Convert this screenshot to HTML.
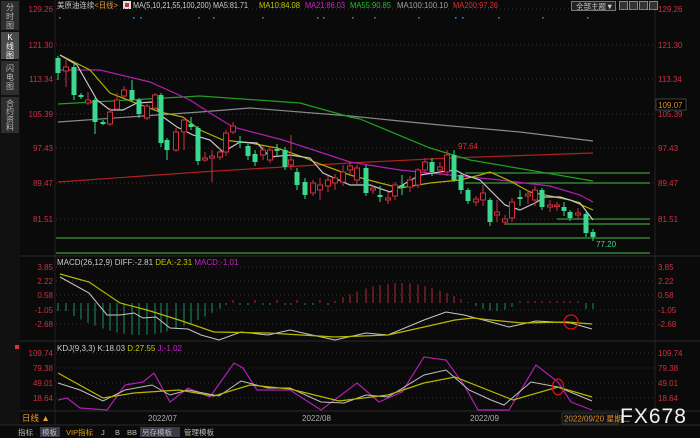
<!DOCTYPE html>
<html><head><meta charset="utf-8"><style>
html,body{margin:0;padding:0;background:#0a0a0a;width:700px;height:438px;overflow:hidden;font-family:"Liberation Sans","Noto Sans CJK SC",sans-serif}
svg{position:absolute;left:0;top:0}
</style></head><body>
<svg id="s" width="700" height="438" xmlns="http://www.w3.org/2000/svg" font-family="Liberation Sans, Noto Sans CJK SC, sans-serif">
<rect width="700" height="438" fill="#0a0a0a"/>
<rect x="0" y="0" width="20" height="425" fill="#111"/>
<rect x="1" y="1" width="18" height="29" fill="#2e2e2e"/>
<rect x="1" y="32" width="18" height="27" fill="#4a4a4a"/>
<rect x="1" y="61" width="18" height="34" fill="#2e2e2e"/>
<rect x="1" y="97" width="18" height="36" fill="#2e2e2e"/>
<g fill="#b8b8b8" font-size="8" text-anchor="middle">
<text x="10" y="10">分</text><text x="10" y="19">时</text><text x="10" y="28">图</text>
<text x="10" y="40" fill="#fff">K</text><text x="10" y="49" fill="#fff">线</text><text x="10" y="58" fill="#fff">图</text>
<text x="10" y="71">闪</text><text x="10" y="80">电</text><text x="10" y="89">图</text>
<text x="10" y="106">合</text><text x="10" y="114">约</text><text x="10" y="122">资</text><text x="10" y="130">料</text>
</g>
<line x1="55" y1="0" x2="55" y2="425" stroke="#222"/>
<line x1="655" y1="0" x2="655" y2="425" stroke="#222"/>
<g stroke="#2a2a2a"><line x1="20" y1="256" x2="700" y2="256"/><line x1="20" y1="341" x2="700" y2="341"/><line x1="20" y1="411" x2="700" y2="411"/><line x1="0" y1="425" x2="700" y2="425"/></g>
<text x="57" y="8" font-size="8" fill="#c8c8c8" textLength="61" lengthAdjust="spacingAndGlyphs">美原油连续<tspan fill="#e0a040">&lt;日线&gt;</tspan></text>
<rect x="123" y="1" width="8" height="8" fill="#ddd"/><rect x="125" y="3" width="4" height="4" fill="#c33"/>
<text x="133" y="8" font-size="8" fill="#d0d0d0" textLength="115" lengthAdjust="spacingAndGlyphs">MA(5,10,21,55,100,200) MA5:81.71</text>
<text x="259" y="8" font-size="8" fill="#c8c800" textLength="41" lengthAdjust="spacingAndGlyphs">MA10:84.08</text>
<text x="305" y="8" font-size="8" fill="#d020d0" textLength="40" lengthAdjust="spacingAndGlyphs">MA21:86.03</text>
<text x="350" y="8" font-size="8" fill="#20c020" textLength="41" lengthAdjust="spacingAndGlyphs">MA55:90.85</text>
<text x="397" y="8" font-size="8" fill="#a0a0a0" textLength="51" lengthAdjust="spacingAndGlyphs">MA100:100.10</text>
<text x="453" y="8" font-size="8" fill="#e03030" textLength="45" lengthAdjust="spacingAndGlyphs">MA200:97.26</text>
<rect x="571.5" y="1.5" width="44" height="9" fill="#222" stroke="#777"/>
<text x="576" y="9" font-size="7.5" fill="#ccc">全部主题▼</text>
<g fill="#333" stroke="#888"><rect x="619.5" y="1.5" width="8" height="8"/><rect x="629.5" y="1.5" width="8" height="8"/><rect x="639.5" y="1.5" width="8" height="8"/><rect x="649.5" y="1.5" width="8" height="8"/></g>
<g id="dyn"></g>
<text x="22" y="421" font-size="8.5" fill="#f0a020">日线 ▲</text>
<g font-size="8" fill="#b0b0b0"><text x="148" y="421">2022/07</text><text x="302" y="421">2022/08</text><text x="470" y="421">2022/09</text></g>
<rect x="562" y="413" width="56" height="11" fill="#111" stroke="#333"/>
<text x="564" y="421.5" font-size="8" fill="#e09020">2022/09/20 星期二</text>
<text x="620" y="423" font-size="21" fill="#f0f0f0" letter-spacing="1">FX678</text>
<rect x="40" y="427" width="20" height="10" fill="#3a3a4a"/>
<rect x="140" y="427" width="40" height="10" fill="#3a3a4a"/>
<g font-size="7.5" fill="#bbb"><text x="18" y="435">指标</text><text x="42" y="435">模板</text><text x="66" y="435" fill="#e0a020">VIP指标</text><text x="101" y="435">J</text><text x="115" y="435">B</text><text x="127" y="435">BB</text><text x="142" y="435">另存模板</text><text x="184" y="435">管理模板</text></g>
</svg>
<script>
var o='';
function L(p,c,w){o+='<polyline fill="none" stroke="'+c+'" stroke-width="'+(w||1)+'" points="'+p+'"/>';}
var main=[["129.26",12],["121.30",48],["113.34",82],["105.39",117],["97.43",151],["89.47",186],["81.51",222]];
var macd=[["3.85",270],["2.22",284],["0.58",298],["-1.05",313],["-2.68",327]];
var kdj=[["109.74",356],["79.38",371],["49.01",386],["18.64",401]];
[main,macd,kdj].forEach(function(a){a.forEach(function(v){
o+='<line x1="56" y1="'+(v[1]-3)+'" x2="654" y2="'+(v[1]-3)+'" stroke="#333" stroke-dasharray="1,3"/>';
o+='<text x="53" y="'+v[1]+'" font-size="8" fill="#d03040" text-anchor="end">'+v[0]+'</text>';
o+='<text x="658" y="'+v[1]+'" font-size="8" fill="#d03040">'+v[0]+'</text>';});});
o+='<rect x="656" y="99" width="30" height="11" fill="#000" stroke="#444"/><text x="658" y="108" font-size="8" fill="#e09020">109.07</text>';
[59,133,140,198,213,262,317,323,352,374,418,455,462,498,542,587].forEach(function(x){o+='<rect x="'+x+'" y="17" width="1.6" height="1.6" fill="#2a8ae0"/>';});
o+='<g stroke="#3a9a3a" stroke-width="1.2"><line x1="465" y1="173" x2="650" y2="173"/><line x1="465" y1="183" x2="650" y2="183"/><line x1="557" y1="219" x2="650" y2="219"/><line x1="505" y1="224" x2="650" y2="224"/><line x1="56" y1="238" x2="650" y2="238"/><line x1="56" y1="253" x2="650" y2="253"/></g>';
L("58,182 200,172 350,163 450,158 593,153","#b02020",1.2);
L("58,122 200,112 250,108 350,116 440,125 520,132 593,141","#8a8a8a",1.2);
L("58,104 200,96 300,103 350,117 360,119 430,148 470,160 593,181","#20a020",1.2);
L("58,70 100,70 150,82 190,100 210,113 233,127 283,140 350,162 400,170 450,175 500,180 550,186 580,195 593,202","#b020b0",1.2);
L("60,55 90,70 110,93 133,102 160,112 183,117 200,130 223,140 250,143 277,148 303,157 317,163 350,175 380,183 400,188 430,183 460,180 480,175 490,172 510,181 530,192 550,196 570,200 593,210","#b0b000",1.2);
L("60,55 77,65 97,100 110,110 123,110 137,103 153,102 163,117 177,127 193,135 210,140 223,152 240,142 257,143 270,157 290,155 310,158 323,173 350,185 370,185 390,192 420,175 440,172 455,170 465,175 480,180 490,190 505,205 520,210 535,203 545,197 560,197 580,203 593,220","#c8c8c8",1.2);
var C=[[58,58,73,56,80],[66,71,67,60,87],[74,67,95,64,100],[81,95,97,93,99],[88,103,100,92,105],[95,100,122,98,134],[103,122,124,120,125],[110,124,112,108,126],[117,109,100,93,110],[124,96,90,86,98],[132,90,100,80,102],[139,100,114,98,118],[147,118,106,104,120],[155,108,95,93,110],[161,95,143,93,147],[167,140,150,138,160],[176,150,132,128,152],[184,132,120,118,150],[191,124,127,117,130],[198,128,161,126,165],[205,160,158,152,162],[212,158,156,150,182],[220,157,152,148,160],[226,152,133,130,156],[233,132,126,122,134],[240,141,143,136,148],[248,146,156,144,160],[255,154,162,150,166],[263,155,150,146,160],[270,160,150,146,163],[277,149,151,144,156],[285,150,167,147,170],[291,165,160,135,170],[297,172,185,168,190],[305,182,195,178,199],[313,193,183,180,196],[320,190,185,178,200],[328,186,180,176,192],[335,183,178,174,190],[343,182,172,165,186],[350,170,166,162,176],[357,180,168,165,184],[366,168,193,165,196],[373,190,188,186,194],[380,195,197,186,202],[388,200,198,192,204],[395,196,185,182,200],[402,185,187,175,195],[410,187,180,176,192],[418,185,170,168,188],[425,170,162,158,174],[432,162,172,158,176],[440,170,167,162,175],[447,172,155,150,176],[454,155,180,150,182],[461,175,190,173,194],[468,190,201,188,204],[476,202,199,196,206],[483,200,193,185,206],[490,200,222,198,226],[497,215,212,200,222],[505,222,219,215,225],[512,218,202,198,222],[520,197,199,190,206],[528,196,194,190,204],[535,200,190,186,206],[542,190,207,188,210],[550,207,205,200,212],[557,206,205,202,211],[564,207,211,202,216],[570,212,218,210,221],[578,215,213,208,220],[586,214,233,212,237],[593,232,237,229,241]];
C.forEach(function(c){var g=c[2]>c[1],col=g?"#3cd890":"#d03040",t=Math.min(c[1],c[2]),b=Math.max(c[1],c[2]);if(b-t<1.5)b=t+1.5;
o+='<line x1="'+c[0]+'" y1="'+c[3]+'" x2="'+c[0]+'" y2="'+c[4]+'" stroke="'+col+'"/>';
o+='<rect x="'+(c[0]-2.5)+'" y="'+t+'" width="5" height="'+(b-t)+'" fill="'+(g?col:"#0a0a0a")+'" stroke="'+col+'" stroke-width="'+(g?0:1)+'"/>';});
o+='<text x="458" y="149" font-size="8" fill="#e03030">97.64</text><text x="596" y="247" font-size="8" fill="#3cd890">77.20</text>';
o+='<text x="57" y="265" font-size="8" fill="#ccc">MACD(26,12,9) DIFF:-2.81 <tspan fill="#c8c800">DEA:-2.31</tspan> <tspan fill="#d020d0">MACD:-1.01</tspan></text>';
C.forEach(function(c,i){var x=c[0],h;
if(x<225){h=-Math.max(4,32*Math.sin(Math.PI*(x-50)/180));if(x<70)h=-8;}
else if(x<330)h=(i%3==0?3:-2);
else if(x<470)h=Math.max(1,20*Math.sin(Math.PI*(x-330)/140));
else if(x<520)h=-8*Math.sin(Math.PI*(x-470)/50);
else h=(x>580?-6:2);
var col=h>0?"#b02838":"#1f9060";o+='<line x1="'+x+'" y1="303" x2="'+x+'" y2="'+(303-h)+'" stroke="'+col+'"/>';});
L("60,277 89,293 107,315 120,315 134,313 143,318 156,317 170,328 188,329 201,335 219,340 241,332 268,335 290,330 312,335 335,340 366,333 388,335 424,320 446,312 464,315 491,322 509,327 536,321 554,322 571,323 592,329","#c8c8c8");
L("60,274 89,282 120,303 147,310 179,320 214,332 268,333 335,337 388,335 424,327 455,320 473,318 491,320 522,323 567,322 592,324","#b8b800",1.2);
o+='<circle cx="571" cy="322" r="7" fill="none" stroke="#e01010" stroke-width="1.3"/>';
o+='<rect x="15" y="345" width="4" height="4" fill="#e03030"/><text x="57" y="351" font-size="8" fill="#ccc">KDJ(9,3,3) K:18.03 <tspan fill="#c8c800">D:27.55</tspan> <tspan fill="#d020d0">J:-1.02</tspan></text>';
L("58,400 67,398 80,408 107,410 125,385 143,382 154,373 170,402 188,388 210,397 234,363 243,368 257,390 290,390 321,410 357,383 379,402 402,392 424,357 446,360 464,385 478,410 509,410 536,365 558,382 571,402 592,410","#b020b0",1.2);
L("58,383 80,390 103,401 125,390 152,385 170,395 188,390 219,396 241,381 268,388 290,388 321,402 344,403 366,395 388,397 424,375 446,370 469,390 491,400 504,405 531,382 558,387 592,401","#c0c0c0");
L("58,373 103,398 134,393 179,390 214,396 250,385 290,389 339,401 388,395 424,383 455,377 513,400 558,387 592,397","#b8b800",1.2);
o+='<ellipse cx="558" cy="387" rx="5.5" ry="8" fill="none" stroke="#e01010" stroke-width="1.3"/>';
document.getElementById('dyn').innerHTML=o;
</script>
</body></html>
